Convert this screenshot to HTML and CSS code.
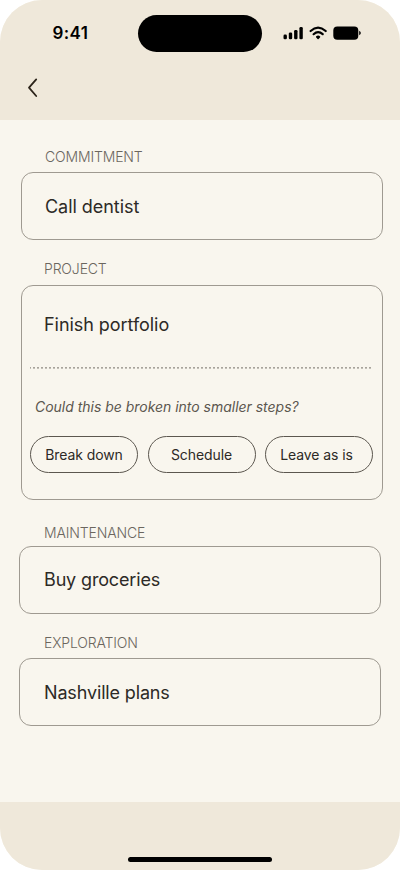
FILE: index.html
```html
<!DOCTYPE html>
<html lang="en">
<head>
<meta charset="utf-8">
<title>Commitments</title>
<link rel="stylesheet" href="styles.css">
</head>
<body>
<div class="phone">
  <header class="header">
    <div class="status">
      <span class="time">9:41</span>
      <span class="island"></span>
      <svg class="indicators" width="80" height="16" viewBox="0 0 80 16" aria-hidden="true">
        <rect x="1.5" y="9.6" width="3.4" height="4.6" rx="1.3"/>
        <rect x="6.8" y="7.4" width="3.4" height="6.8" rx="1.3"/>
        <rect x="12.1" y="5" width="3.4" height="9.2" rx="1.3"/>
        <rect x="17.4" y="2" width="3.4" height="12.2" rx="1.3"/>
        <g class="waves">
          <path d="M28.6 6 Q36 -0.6 43.7 6"/>
          <path d="M31.6 9.2 Q36.1 5.2 40.7 9.2"/>
        </g>
        <path d="M34 11.4 Q36.1 9.8 38.2 11.4 Q38.5 12 38 12.5 L36.6 14 Q36.1 14.4 35.6 14 L34.2 12.5 Q33.7 12 34 11.4 Z"/>
        <rect x="51.3" y="1.5" width="25" height="13.2" rx="4"/>
        <path d="M77.2 5.8 Q78.8 6.5 78.8 8 Q78.8 9.5 77.2 10.2 Z"/>
      </svg>
    </div>
    <button class="back" aria-label="Back">
      <svg width="12" height="20" viewBox="0 0 12 20"><path d="M9.2 1.4 L2 9.7 L9.2 18"/></svg>
    </button>
  </header>
  <main class="content">
    <section class="group commitment">
      <h2 class="label">COMMITMENT</h2>
      <div class="card"><p class="item">Call dentist</p></div>
    </section>
    <section class="group project">
      <h2 class="label">PROJECT</h2>
      <div class="card">
        <p class="item">Finish portfolio</p>
        <svg class="divider" width="341" height="2"><path d="M0 0.9H341"/></svg>
        <p class="hint">Could this be broken into smaller steps?</p>
        <div class="actions">
          <button class="pill">Break down</button>
          <button class="pill">Schedule</button>
          <button class="pill leave">Leave as is</button>
        </div>
      </div>
    </section>
    <section class="group maintenance">
      <h2 class="label">MAINTENANCE</h2>
      <div class="card"><p class="item">Buy groceries</p></div>
    </section>
    <section class="group exploration">
      <h2 class="label">EXPLORATION</h2>
      <div class="card"><p class="item">Nashville plans</p></div>
    </section>
  </main>
  <footer class="footer"><span class="home-bar"></span></footer>
</div>
</body>
</html>
```
FILE: styles.css
```css
* { box-sizing: border-box; }
body { margin: 0; background: #fff; font-family: Inter, sans-serif; color: #2d2a26; }
h2, p { margin: 0; font-weight: 400; }
button { font: inherit; color: inherit; background: none; padding: 0; }

.phone {
  width: 400px; height: 870px;
  display: flex; flex-direction: column;
  border-radius: 42px; overflow: hidden;
  background: #f9f6ee;
}
.header { height: 120px; background: #efe8da; }
.status { display: flex; padding-top: 15px; height: 67px; }
.time {
  width: 138px; padding-left: 52.5px;
  font-size: 17px; line-height: 37px; font-weight: 600; letter-spacing: 0.4px; color: #000;
}
.island { width: 124px; height: 37px; border-radius: 19px; background: #000; }
.indicators { margin: 10px 0 0 20px; }
.waves { fill: none; stroke: #000; stroke-width: 2.2; stroke-linecap: round; }
.back { display: flex; margin: 11px 0 0 27px; border: 0; }
.back path { fill: none; stroke: #2d251b; stroke-width: 1.8; stroke-linecap: round; stroke-linejoin: round; }

.content { flex: 1; padding-top: 27px; }
.group { width: 362px; }
.label {
  font-size: 14px; line-height: 20px; font-weight: 300; color: #6b665e;
  letter-spacing: -0.15px; white-space: nowrap;
}
.card { border: 1px solid #9f9a91; border-radius: 12px; }
.item { font-size: 18px; line-height: 24px; letter-spacing: -0.05px; white-space: nowrap; }

.commitment { margin-left: 21px; }
.commitment .label { padding-left: 24px; }
.commitment .card { margin-top: 5px; height: 68px; padding: 22px 23px; }

.project { margin: 19px 0 0 21px; }
.project .label { padding-left: 23px; }
.project .card { margin-top: 6px; height: 215px; padding: 27px 8px 0; }
.project .item { padding-left: 14px; }
.divider { display: block; margin-top: 30px; }
.divider path { stroke: #8e8981; stroke-width: 1.2; stroke-dasharray: 2 2; stroke-dashoffset: 1; }
.hint {
  margin-top: 28px; padding-left: 5px;
  font-size: 14px; line-height: 20px; font-style: italic; letter-spacing: -0.02px; color: #5c574f;
}
.actions { display: flex; gap: 9.5px; width: 344px; margin-top: 19px; }
.pill {
  flex: none; width: 108px; height: 37px;
  border: 1px solid #5c574f; border-radius: 19px;
  font-size: 14px; line-height: 20px; letter-spacing: -0.08px; white-space: nowrap;
}
.leave { padding-right: 5px; }

.maintenance, .exploration { margin-left: 19px; }
.maintenance .label, .exploration .label { padding-left: 25px; }
.maintenance .item, .exploration .item { padding-left: 24px; letter-spacing: -0.15px; }
.maintenance { margin-top: 23px; }
.maintenance .card { margin-top: 3px; height: 68px; padding-top: 21px; }
.exploration { margin-top: 19px; }
.exploration .card { margin-top: 5px; height: 68px; padding-top: 22px; }

.footer { height: 68px; padding-top: 55px; background: #efe8da; }
.home-bar { display: block; width: 144px; height: 5px; margin-left: 128px; border-radius: 3px; background: #000; }
```
